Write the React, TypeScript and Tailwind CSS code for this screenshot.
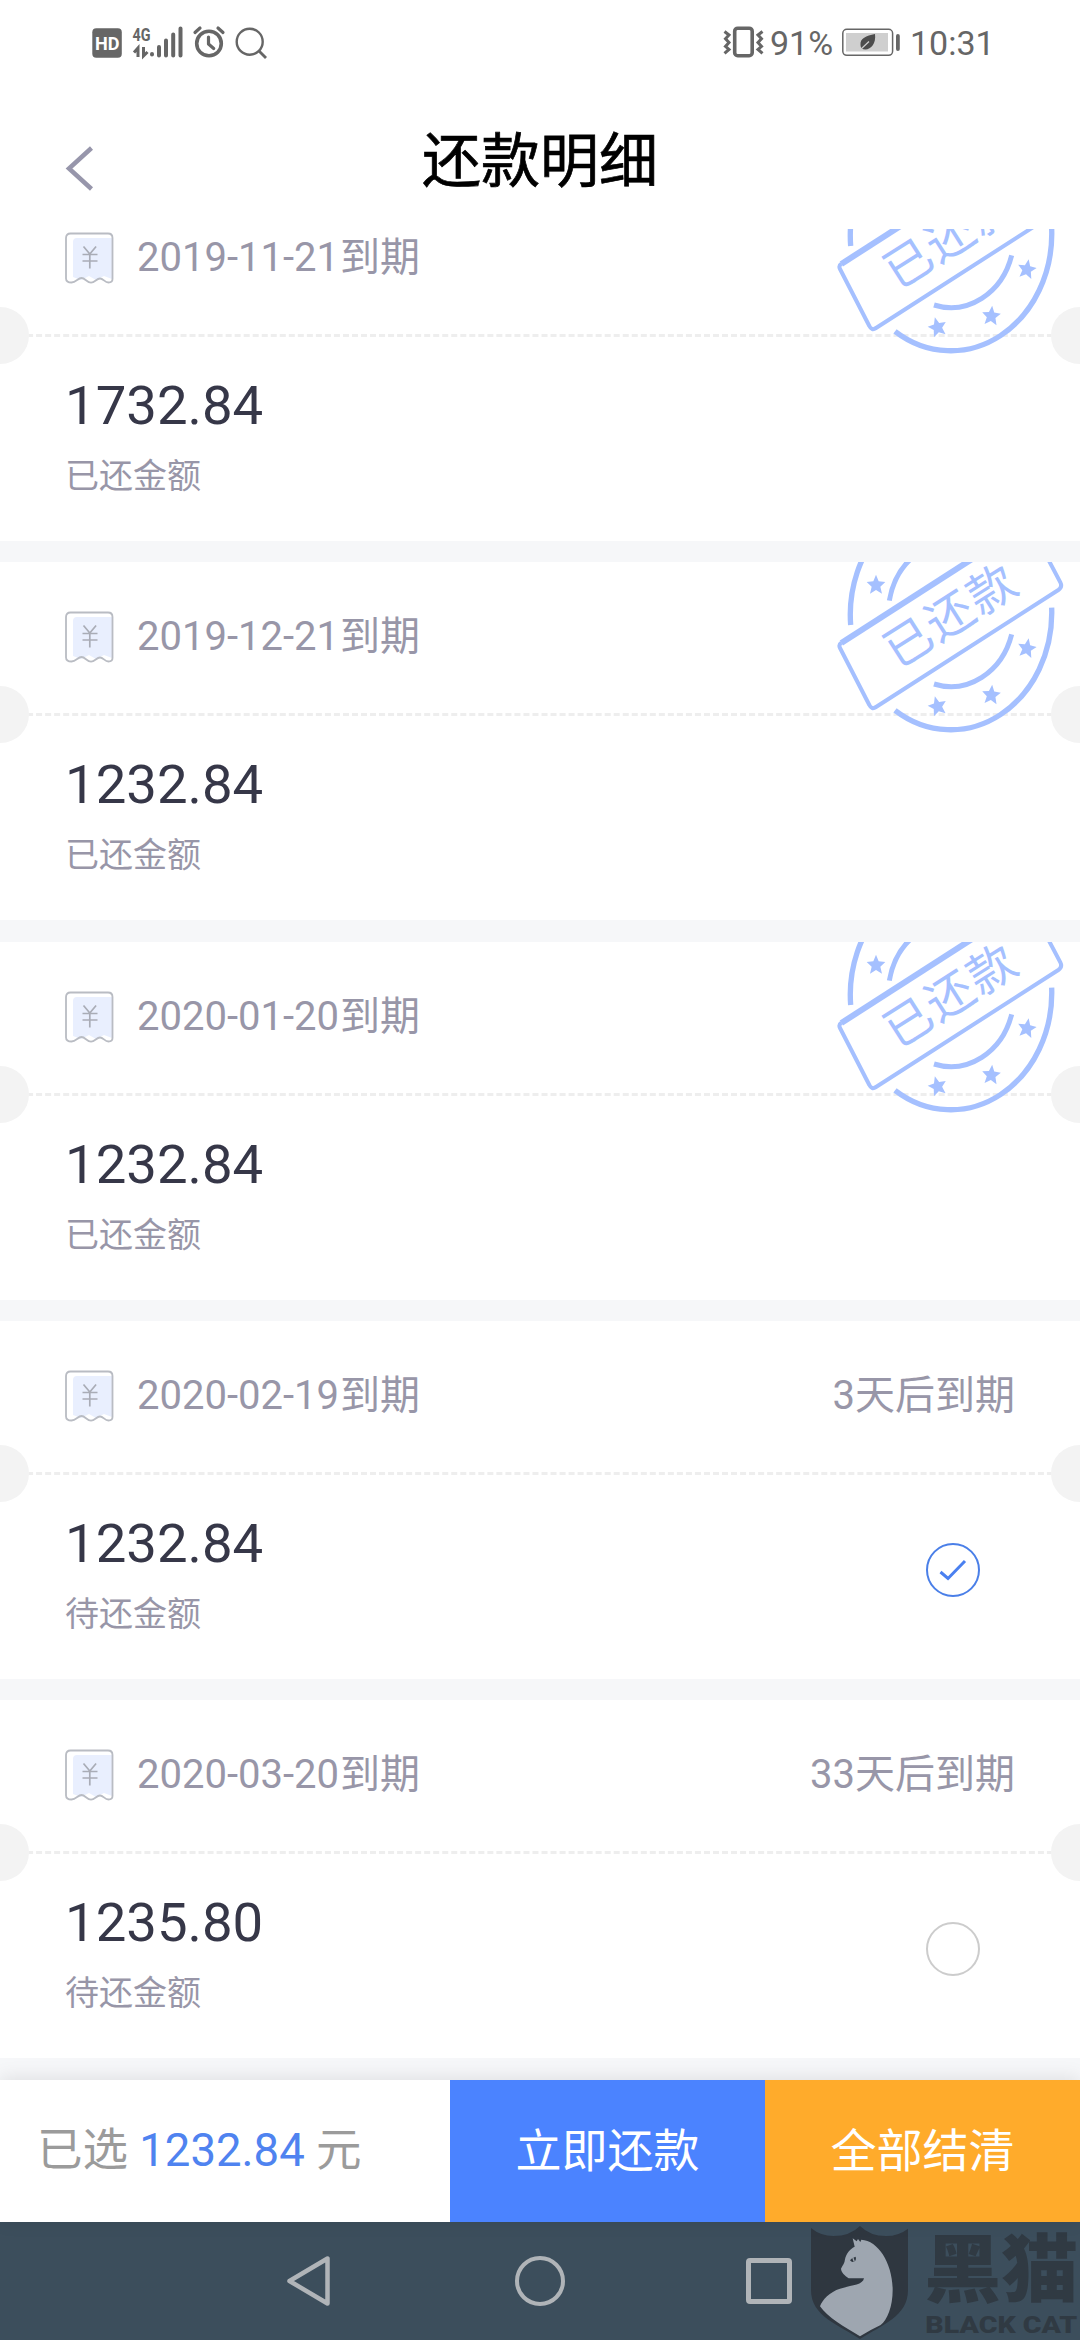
import React from 'react'
import clsx from 'clsx'

interface Bill {
  date: string
  amount: string
  paid?: boolean
  dueIn?: string
  checked?: boolean
}

const BILLS: Bill[] = [
  { date: '2019-11-21', amount: '1732.84', paid: true },
  { date: '2019-12-21', amount: '1232.84', paid: true },
  { date: '2020-01-20', amount: '1232.84', paid: true },
  { date: '2020-02-19', amount: '1232.84', dueIn: '3天后到期', checked: true },
  { date: '2020-03-20', amount: '1235.80', dueIn: '33天后到期' },
]

export default function App() {
  return (
    <div className="flex h-[2340px] w-[1080px] flex-col overflow-hidden bg-white font-['Roboto','Noto_Sans_CJK_SC',sans-serif]">
      <StatusBar />
      <Header />
      <main className="min-h-0 flex-1 overflow-hidden bg-[#f6f7f9]">
        {/* list is scrolled so the first card is partly cut off */}
        <div className="-mt-[46px]">
          {BILLS.map(bill => (
            <BillCard key={bill.date} bill={bill} />
          ))}
        </div>
      </main>
      <PayBar />
      <NavBar />
    </div>
  )
}

function StatusBar() {
  return (
    <div className="flex h-[86px] shrink-0 items-center text-[#666]">
      <svg className="ml-[90px] h-[86px] w-[180px]" viewBox="90 0 180 86" fill="none" stroke="currentColor">
        <rect x="92.3" y="28.3" width="29.5" height="29.5" rx="4" fill="currentColor" stroke="none" />
        <text x="95" y="50" textLength="24.5" lengthAdjust="spacingAndGlyphs" fontSize="19" fontWeight="700" fill="#fff" stroke="none">HD</text>
        <text x="132.5" y="41" textLength="18" lengthAdjust="spacingAndGlyphs" fontSize="19" fontWeight="700" fill="currentColor" stroke="none">4G</text>
        <path d="M138 57V48L134 52.500M143.500 47V56L147.500 52" strokeWidth="3" />
        <path d="M152 54v0.500M159 47v8.500M166 40.500v15M173.200 34.500v21M180.500 28.500v27" strokeWidth="4" strokeLinecap="round" />
        <circle cx="209" cy="43.500" r="12.300" strokeWidth="3.600" />
        <path d="M208.500 37v7l5.200 4.500" strokeWidth="3.200" strokeLinecap="round" strokeLinejoin="round" />
        <path d="M195 32.500l5-4.500M223 32.500l-5-4.500" strokeWidth="3.200" strokeLinecap="round" />
        <circle cx="249.700" cy="41.700" r="13" strokeWidth="2.400" />
        <path d="M259 51l7 7" strokeWidth="2.800" />
      </svg>
      <svg className="ml-[452px] h-[86px] w-[46px]" viewBox="722 0 46 86" fill="none" stroke="currentColor">
        <rect x="734.700" y="28.200" width="17.500" height="27.500" rx="3" strokeWidth="3.600" />
        <path d="M724.500 31.500l4.500 3.500-3.500 3.800 3.500 3.800-3.500 3.800 3.500 3-4.500 4M762.500 31.500l-4.500 3.500 3.500 3.800-3.500 3.800 3.500 3.800-3.500 3 4.500 4" strokeWidth="3" />
      </svg>
      <span className="ml-[2px] w-[71px] text-[34px] leading-none">91%</span>
      <svg className="h-[86px] w-[62px]" viewBox="840 0 62 86" fill="none" stroke="currentColor">
        <rect x="841.800" y="29.300" width="49.800" height="26" rx="4" strokeWidth="1.500" />
        <rect x="845" y="33" width="42" height="18.500" fill="#cfcfcf" stroke="none" />
        <rect x="895" y="34" width="3.800" height="17" rx="1.900" fill="currentColor" stroke="none" />
        <path d="M874 34c-9 2-15 4-14.500 11 .1 1.500.5 2.800 1 3.500 7 3.500 15-3 13.500-14.500z" fill="#4d4d4d" stroke="none" />
        <path d="M859 50l9-8.500" stroke="#cfcfcf" strokeWidth="1.200" />
      </svg>
      <span className="ml-[7px] text-[34px] leading-none">10:31</span>
    </div>
  )
}

function Header() {
  return (
    <header className="flex h-[143px] shrink-0 items-start px-[65px] pt-[46px]">
      <button className="mt-[13px] h-[46px] w-[60px]">
        <svg className="h-[46px] w-[30px]" viewBox="0 0 30 46" fill="none" stroke="#9796ab" strokeWidth="4.500">
          <path d="M26.500 3L4 23.500 26.500 44" />
        </svg>
      </button>
      <h1 className="flex-1 text-center text-[59px] leading-[60px] font-normal text-black [-webkit-text-stroke:0.7px_#000]">还款明细</h1>
      <div className="w-[60px]" />
    </header>
  )
}

function BillCard({ bill }: { bill: Bill }) {
  return (
    <section className="relative mb-[21.330px] h-[358px] overflow-hidden bg-white">
      <div className="flex h-[151px] items-center justify-between px-[65px] pb-px text-[40px] text-[#9896a8]">
        <div className="flex items-center">
          <ReceiptIcon />
          <span className="ml-[22px]">
            {bill.date}
            <span className="ml-px">到期</span>
          </span>
        </div>
        {bill.dueIn && <span>{bill.dueIn}</span>}
      </div>
      <div className="border-t-3 border-dashed border-[#eeeeee]" />
      <div className="flex h-[204px] justify-between pr-[100px] pl-[65px]">
        <div className="flex flex-col pt-[35px]">
          <span className="text-[54.500px] leading-[66px] text-[#363748]">{bill.amount}</span>
          <span className="mt-[13px] text-[34px] leading-[50px] text-[#9896a8]">{bill.paid ? '已还金额' : '待还金额'}</span>
        </div>
        {!bill.paid && <CheckCircle checked={bill.checked} />}
      </div>

      {/* ticket notches */}
      <div className="absolute top-[124px] -left-[28px] size-[57px] rounded-full bg-[#f3f3f3]" />
      <div className="absolute top-[124px] -right-[28px] size-[57px] rounded-full bg-[#f3f3f3]" />
      {bill.paid && <PaidStamp />}
    </section>
  )
}

function ReceiptIcon() {
  return (
    <svg className="h-[52px] w-[50px]" viewBox="0 0 50 52" fill="none">
      <path d="M8 10q0-4 4-4h35v41l-8-3-8 4-7-4-8 4-8-3z" fill="#e9effe" />
      <path
        d="M5.500 1.500h37.500q4.500 0 4.500 4.500v41q0 3.500-4 3.500c-4 0-5-4-8.500-4s-5 4-9 4.200c-4-.2-6-4.700-9.500-4.700s-5.500 4.500-10 4.500Q1 50.500 1 46.500V6Q1 1.500 5.500 1.500z"
        stroke="#b9bcc3"
        strokeWidth="1.800"
      />
      <path d="M18.500 14.500l6.300 7.500 6.300-7.500M24.800 22v14.500M17.500 22.500h15M17.500 29h15" stroke="#a9acb6" strokeWidth="1.700" />
    </svg>
  )
}

function CheckCircle({ checked }: { checked?: boolean }) {
  return (
    <div className={clsx('mt-[68px] flex size-[54px] items-center justify-center rounded-full border-2', checked ? 'border-[#4a7fe8]' : 'border-[#cccccc]')}>
      {checked && (
        <svg className="size-[30px]" viewBox="0 0 30 30" fill="none" stroke="#4a80f0" strokeWidth="3">
          <path d="M2.500 17l7.500 6.500L27 6" />
        </svg>
      )}
    </div>
  )
}

const STARS = [
  [228, 133, 0],
  [412, 497, -15],
  [574, 463, 5],
  [681, 323, 10],
]

function PaidStamp() {
  return (
    <svg className="absolute top-0 right-0 h-[178px] w-[280px]" viewBox="0 66 840 534" fill="none" stroke="#a5c0ff">
      {/* outer ring */}
      <path d="M152 255A303 351 0 0 1 250 -35M755 203A303 351 0 0 1 285 511" strokeWidth="16" />
      {/* inner ring */}
      <path d="M268 182A190 216 0 0 1 350 42M402 432A190 216 0 0 0 635 283" strokeWidth="15" />
      <path d="M124 309L686 -52" strokeWidth="18" />
      <path d="M124 308Q115 314 120 324L208 495Q215 510 228 501L775 150Q788 141 781 127L686 -53" strokeWidth="12" strokeLinejoin="round" />
      {STARS.map(([x, y, r]) => (
        <path
          key={x}
          transform={`translate(${x} ${y}) rotate(${r})`}
          d="M0-29L8-9 28-7 13 7 18 28 0 17-18 28-13 7-28-7-8-9z"
          fill="#a5c0ff"
          stroke="none"
        />
      ))}
      <text
        transform="translate(454 228) rotate(-32.500)"
        textAnchor="middle"
        dominantBaseline="central"
        fontSize="142"
        fontWeight="400"
        letterSpacing="6"
        fill="#a5c0ff"
        stroke="none"
      >
        已还款
      </text>
    </svg>
  )
}

function PayBar() {
  return (
    <div className="relative flex h-[142px] shrink-0 bg-white text-[46px] shadow-[0_-2px_18px_rgba(0,0,0,0.100)]">
      <div className="flex w-[450px] items-center pl-[37px] text-[45.500px] whitespace-pre text-[#9b9b9b]">
        已选 <span className="text-[#4f83f0]">1232.84</span> 元
      </div>
      <button className="w-[315px] bg-[#4b83ff] text-white">立即还款</button>
      <button className="w-[315px] bg-[#ffab2b] text-white">全部结清</button>
    </div>
  )
}

function NavBar() {
  return (
    <nav className="flex h-[118px] shrink-0 items-center bg-[#3c4e5c]">
      <svg className="ml-[284px] h-[54px] w-[50px]" viewBox="0 0 50 54" fill="none" stroke="#b0b4b8" strokeWidth="4.500" strokeLinejoin="round">
        <path d="M43.500 4.500v45L5.500 27z" />
      </svg>
      <div className="ml-[181px] size-[50px] rounded-full border-4 border-[#b0b4b8]" />
      <div className="ml-[181px] size-[46px] rounded-[4px] border-[5px] border-[#b0b4b8]" />
      <Watermark />
    </nav>
  )
}

function Watermark() {
  return (
    <svg className="ml-[18px] h-[118px] w-[270px]" viewBox="0 66 810 354">
      {/* shield */}
      <path
        d="M3 84Q32 108 70 108 120 108 150 78 180 108 228 108 266 108 294 86V270C294 350 215 375 150 417 88 375 3 350 3 270z"
        fill="#2f3740"
      />
      <path
        d="M128 115L140 124 144 117 151 126 154 119C205 122 248 190 248 270 248 320 232 360 212 375Q178 391 150 409C105 382 52 352 30 319 36 300 60 275 90 266 125 255 158 256 162 235L116 235C104 226 94 218 93 206 98 196 104 190 105 178 108 160 122 146 134 140z"
        fill="#9ea6b0"
      />
      <path d="M120 181q6-9 17-11 3 9-4 15-7 4-13-4z" fill="#2f3740" />
      <path d="M128 172l5 13" stroke="#9ea6b0" strokeWidth="4" />
      <text x="343" y="289" textLength="462" lengthAdjust="spacingAndGlyphs" fontSize="220" fontWeight="900" fill="#303a43">黑猫</text>
      <text x="346" y="398" textLength="456" lengthAdjust="spacingAndGlyphs" fontSize="70" fontWeight="900" fill="#303a43">BLACK CAT</text>
    </svg>
  )
}
